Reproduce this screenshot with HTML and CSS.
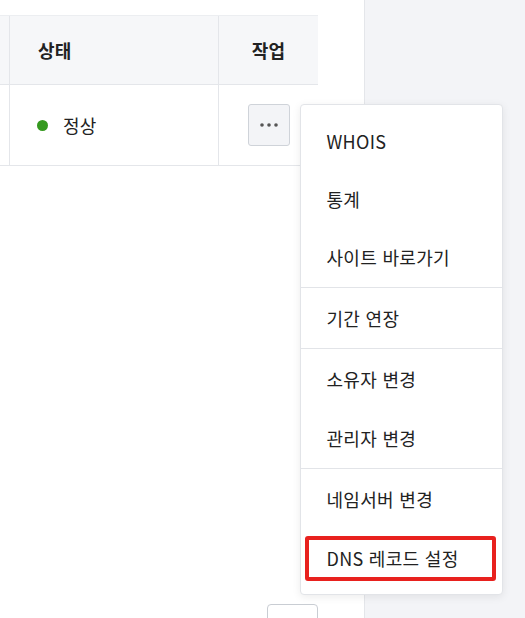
FILE: index.html
```html
<!DOCTYPE html>
<html lang="ko">

<head>
    <meta charset="UTF-8">
    <meta name="viewport" content="width=device-width, initial-scale=1.0">
    <title>도메인 관리</title>
    <link rel="stylesheet" href="styles.css">
</head>

<body>
    <div class="panel">
        <div class="domainTable">
            <div class="row head">
                <div class="cell edge"></div>
                <div class="cell status">상태</div>
                <div class="cell action">작업</div>
            </div>
            <div class="row body">
                <div class="cell edge"></div>
                <div class="cell status"><span class="dot"></span>정상</div>
                <div class="cell action">
                    <div class="actionWrap">
                        <button class="moreBtn" aria-label="더보기">
                            <svg width="18" height="4" viewBox="0 0 18 4">
                                <circle cx="2" cy="2" r="1.8" fill="#555" />
                                <circle cx="9" cy="2" r="1.8" fill="#555" />
                                <circle cx="16" cy="2" r="1.8" fill="#555" />
                            </svg>
                        </button>
                        <ul class="menu">
                            <li class="menuItem">WHOIS</li>
                            <li class="menuItem">통계</li>
                            <li class="menuItem">사이트 바로가기</li>
                            <li class="divider"></li>
                            <li class="menuItem">기간 연장</li>
                            <li class="divider"></li>
                            <li class="menuItem">소유자 변경</li>
                            <li class="menuItem">관리자 변경</li>
                            <li class="divider"></li>
                            <li class="menuItem">네임서버 변경</li>
                            <li class="menuItem marked">DNS 레코드 설정<span class="highlight"></span></li>
                        </ul>
                    </div>
                </div>
            </div>
        </div>
        <div class="pager">
            <button class="pageBtn"></button>
        </div>
    </div>
    <div class="side"></div>
</body>

</html>
```

FILE: styles.css
```css
* {
    box-sizing: border-box;
}

body {
    margin: 0;
    height: 618px;
    overflow: hidden;
    display: flex;
    font-family: "Noto Sans CJK KR", sans-serif;
    font-size: 18px;
    letter-spacing: 0.3px;
    color: #222;
    background: #f3f4f7;
}

.panel {
    width: 365px;
    background: #fff;
    border-right: 1px solid #e4e6ea;
    padding-top: 15px;
}

.side {
    flex: 1;
}

.domainTable {
    width: 318px;
}

.row {
    display: grid;
    grid-template-columns: 9px 209px 100px;
}

.row.head {
    height: 70px;
    background: #f6f7f9;
    border-top: 1px solid #eceef1;
    border-bottom: 1px solid #e4e6ea;
    font-weight: 700;
}

.row.body {
    height: 81px;
    border-bottom: 1px solid #e4e6ea;
}

.cell {
    display: flex;
    align-items: center;
}

.cell.status,
.cell.action {
    border-left: 1px solid #e4e6ea;
}

.cell.status {
    padding-left: 28px;
}

.row.body .cell.status {
    padding-left: 27px;
}

.cell.action {
    justify-content: center;
}

.dot {
    width: 11px;
    height: 11px;
    border-radius: 50%;
    background: #35991f;
    margin-right: 15px;
}

.actionWrap {
    position: relative;
}

.moreBtn {
    width: 42px;
    height: 42px;
    display: flex;
    align-items: center;
    justify-content: center;
    padding: 0;
    background: #f3f4f7;
    border: 1px solid #cfd3d9;
    border-radius: 3px;
}

.menu {
    position: absolute;
    left: 52px;
    top: 0;
    width: 203px;
    margin: 0;
    padding: 7px 0;
    list-style: none;
    background: #fff;
    border: 1px solid #e2e4e8;
    border-radius: 4px;
    box-shadow: 0 2px 8px rgba(0, 0, 0, 0.08);
    font-weight: 400;
    z-index: 5;
}

.menuItem {
    position: relative;
    height: 58px;
    display: flex;
    align-items: center;
    padding-left: 26px;
    white-space: nowrap;
}

.divider {
    height: 1px;
    margin: 1px 0;
    background: #e2e4e8;
}

.divider + .menuItem + .menuItem {
    height: 59px;
}

.highlight {
    position: absolute;
    left: 4px;
    top: 8px;
    width: 191px;
    height: 45px;
    border: 4px solid #e8211e;
    border-radius: 3px;
}

.pager {
    width: 318px;
    margin-top: 438px;
    display: flex;
    justify-content: flex-end;
}

.pageBtn {
    width: 51px;
    height: 32px;
    background: #fff;
    border: 1px solid #c9cdd3;
    border-radius: 4px;
}
```
